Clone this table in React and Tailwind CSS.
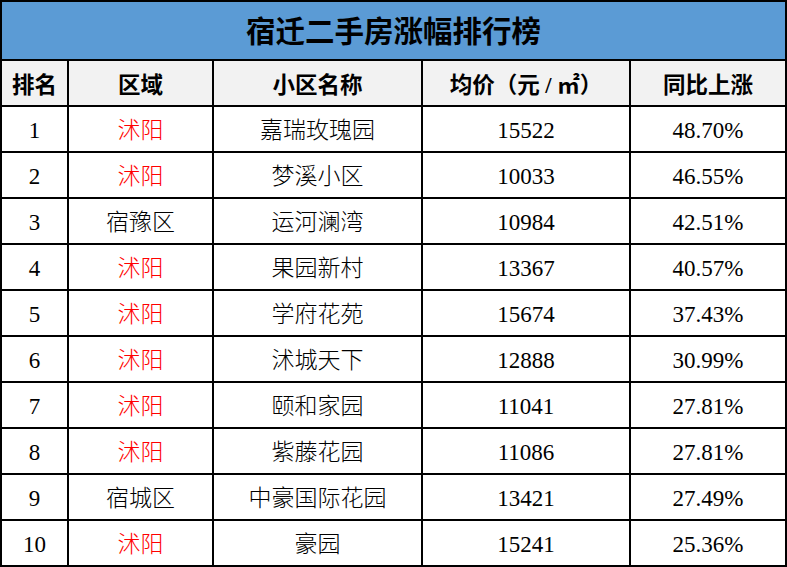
const rows = [
  ["1", "沭阳", "嘉瑞玫瑰园", "15522", "48.70%"],
  ["2", "沭阳", "梦溪小区", "10033", "46.55%"],
  ["3", "宿豫区", "运河澜湾", "10984", "42.51%"],
  ["4", "沭阳", "果园新村", "13367", "40.57%"],
  ["5", "沭阳", "学府花苑", "15674", "37.43%"],
  ["6", "沭阳", "沭城天下", "12888", "30.99%"],
  ["7", "沭阳", "颐和家园", "11041", "27.81%"],
  ["8", "沭阳", "紫藤花园", "11086", "27.81%"],
  ["9", "宿城区", "中豪国际花园", "13421", "27.49%"],
  ["10", "沭阳", "豪园", "15241", "25.36%"],
];

const headers = ["排名", "区域", "小区名称", "均价（元 / ㎡）", "同比上涨"];

const font = { fontFamily: '"Liberation Serif", "Noto Sans CJK SC", serif' };

export default function App() {
  return (
    <div className="w-[787px] h-[567px] bg-black p-[2px] flex flex-col gap-[2px] overflow-hidden" style={font}>
      <div className="h-[57px] bg-[#5b9bd5] flex items-center justify-center pt-[4px] text-[29.5px] font-bold text-black">
        宿迁二手房涨幅排行榜
      </div>
      <div className="grid grid-cols-[65px_143px_207px_206px_154px] auto-rows-[44px] gap-[2px]">
        {headers.map((h) => (
          <div key={h} className="bg-[#f2f2f2] flex items-center justify-center pt-[6px] text-[22.5px] font-bold text-black whitespace-pre">
            {h}
          </div>
        ))}
        {rows.map((r) =>
          r.map((c, i) => (
            <div
              key={r[0] + "-" + i}
              className={
                "bg-white flex items-center justify-center pt-[5px] text-[23px] font-light " +
                (i === 1 && c === "沭阳" ? "text-[#ff0000]" : "text-black")
              }
            >
              {c}
            </div>
          ))
        )}
      </div>
    </div>
  );
}
